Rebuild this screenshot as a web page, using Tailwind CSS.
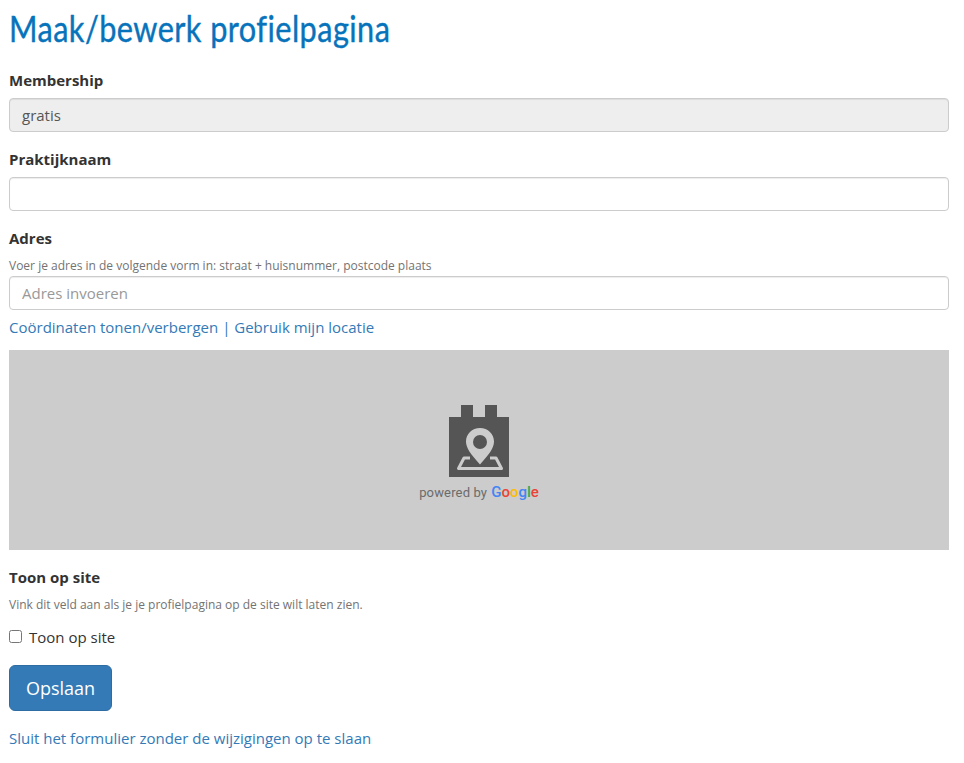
<!DOCTYPE html>
<html lang="nl">
  <head>
    <meta charset="UTF-8" />
    <script src="https://cdn.jsdelivr.net/npm/@tailwindcss/browser@4"></script>
    <title>Maak/bewerk profielpagina</title>
  </head>
  <body class="bg-white text-[#333] text-[15px] leading-[21px] font-['Open_Sans',sans-serif]">
    <div class="w-[964px] h-[763px] overflow-hidden px-[9px] pt-[10px]">
      <!-- header -->
      <h1 class="h-[44px] text-[36px] leading-[36px] tracking-[0.5px] text-[#0773bb] font-['Lato',sans-serif] origin-left scale-x-[0.853] [-webkit-text-stroke:0.4px_#0773bb] [font-variant-ligatures:none] whitespace-nowrap">Maak/bewerk profielpagina</h1>

      <form class="w-[940px] mt-[16px]">
        <!-- membership -->
        <label class="block h-[21px] font-bold">Membership</label>
        <div class="mt-[7px] h-[34px] px-3 flex items-center rounded-[4px] border border-[#ccc] bg-[#eee] text-[#555] shadow-[inset_0_1px_1px_rgba(0,0,0,0.075)]">gratis</div>

        <!-- praktijknaam -->
        <label class="block h-[21px] mt-[17px] font-bold">Praktijknaam</label>
        <input type="text" class="block mt-[7px] w-full h-[34px] px-3 rounded-[4px] border border-[#ccc] bg-white shadow-[inset_0_1px_1px_rgba(0,0,0,0.075)]" />

        <!-- adres -->
        <label class="block h-[21px] mt-[17px] font-bold">Adres</label>
        <p class="mt-[7px] h-[19px] text-[12px] leading-[19px] text-[#737373]">Voer je adres in de volgende vorm in: straat + huisnummer, postcode plaats</p>
        <input type="text" placeholder="Adres invoeren" class="block w-full mt-[1px] h-[34px] px-3 rounded-[4px] border border-[#ccc] bg-white shadow-[inset_0_1px_1px_rgba(0,0,0,0.075)] placeholder:text-[#999]" />
        <p class="mt-[7px] h-[21px] text-[#337ab7]"><a href="#">Coördinaten tonen/verbergen</a> | <a href="#">Gebruik mijn locatie</a></p>

        <!-- kaart -->
        <div class="mt-[12px] h-[200px] bg-[#ccc] flex flex-col items-center pt-[55px]">
          <svg width="60" height="72" viewBox="0 0 60 72" class="block">
            <path fill="#555" d="M12 0h12v12h12V0h12v12h12v60H0V12h12z" />
            <path fill="#ccc" fill-rule="evenodd" d="M31 23c-8 0-14 6-14 13.500 0 6 4 12 14 23 10-11 14-17 14-23C45 29 39 23 31 23zm0 7a7 7 0 1 1 0 14 7 7 0 0 1 0-14z" />
            <path fill="none" stroke="#ccc" stroke-width="3" stroke-linejoin="round" d="M21 53h-6l-5.500 10.500h43L47 53h-6" />
          </svg>
          <div class="mt-[5px] flex items-baseline h-[20px] text-[13px] leading-[20px] tracking-[0.15px] text-[#6b6b6b] font-['Roboto',sans-serif]">
            <span>powered by</span>
            <span class="ml-[4px] text-[15px] font-medium tracking-normal font-['Roboto',sans-serif]"><span class="text-[#4285f4]">G</span><span class="text-[#ea4335]">o</span><span class="text-[#fbbc05]">o</span><span class="text-[#4285f4]">g</span><span class="text-[#34a853]">l</span><span class="text-[#ea4335]">e</span></span>
          </div>
        </div>

        <!-- toon op site -->
        <label class="block h-[21px] mt-[17px] font-bold">Toon op site</label>
        <p class="mt-[9px] h-[15px] text-[12px] leading-[16px] text-[#737373]">Vink dit veld aan als je je profielpagina op de site wilt laten zien.</p>
        <label class="mt-[15px] h-[21px] flex items-center">
          <input type="checkbox" class="w-[13px] h-[13px] m-0 mb-[3px]" />
          <span class="ml-[7px]">Toon op site</span>
        </label>
        <button type="button" class="block mt-[17px] w-[103px] h-[46px] rounded-[6px] border border-[#2e6da4] bg-[#337ab7] text-white text-[18px]">Opslaan</button>
        <p class="mt-[17px] h-[21px]"><a href="#" class="text-[#337ab7]">Sluit het formulier zonder de wijzigingen op te slaan</a></p>
      </form>
    </div>
  </body>
</html>
